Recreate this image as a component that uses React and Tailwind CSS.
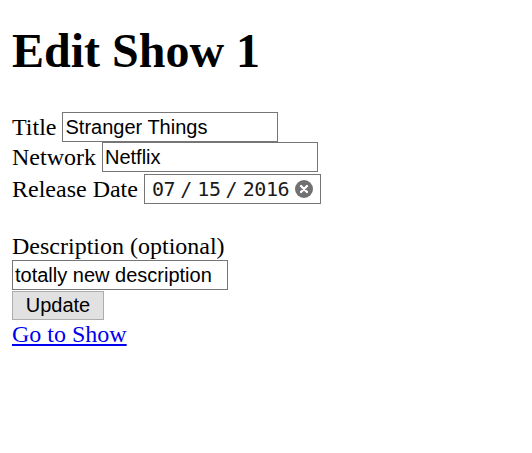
export default function App() {
  const serif = "font-['Liberation_Serif',serif]";
  const sans = "font-['Liberation_Sans',sans-serif]";
  const field =
    "h-[30px] w-[216px] border border-[#767676] bg-white pl-[2px] pr-[3px] text-[20px] leading-[28px] text-black outline-none " +
    sans;

  return (
    <div className={`min-h-[453px] bg-white px-[12px] text-[24px] leading-[30px] text-black ${serif}`}>
      {/* heading */}
      <h1 className="pt-[23px] text-[48px] font-bold leading-[55px]">Edit Show 1</h1>

      <form className="mt-[34px] flex flex-col items-start">
        <div className="flex h-[30px] items-center gap-[6px]">
          <span>Title</span>
          <input className={field} defaultValue="Stranger Things" />
        </div>
        <div className="flex h-[30px] items-center gap-[6px]">
          <span>Network</span>
          <input className={field} defaultValue="Netflix" />
        </div>
        <div className="mt-[2px] flex h-[30px] items-center gap-[6px]">
          <span>Release Date</span>
          <div className="flex h-[30px] w-[177px] items-center border border-[#767676] bg-white pl-[7px] text-[20px] text-[#1a1a1a] font-['DejaVu_Sans_Mono',monospace]">
            <span className="tracking-[-0.4px]">07</span>
            <span className="mx-[5px]">/</span>
            <span className="tracking-[-0.4px]">15</span>
            <span className="mx-[5px]">/</span>
            <span className="tracking-[-0.4px]">2016</span>
            {/* clear button */}
            <svg className="ml-[6px]" width="18" height="18" viewBox="0 0 18 18">
              <circle cx="9" cy="9" r="9" fill="#717171" />
              <path d="M6 6l6 6M12 6l-6 6" stroke="#fff" strokeWidth="2.4" strokeLinecap="round" />
            </svg>
          </div>
        </div>

        <div className="mt-[28px] leading-[28px]">Description (optional)</div>
        <input className={field} defaultValue="totally new description" />
        <button
          type="button"
          className={`mt-[1px] h-[29px] w-[92px] border border-[#adadad] bg-[#e1e1e1] text-[20px] leading-[27px] text-black ${sans}`}
        >
          Update
        </button>
        <a href="#" className="leading-[29px] text-[#0000ee] underline">
          Go to Show
        </a>
      </form>
    </div>
  );
}
